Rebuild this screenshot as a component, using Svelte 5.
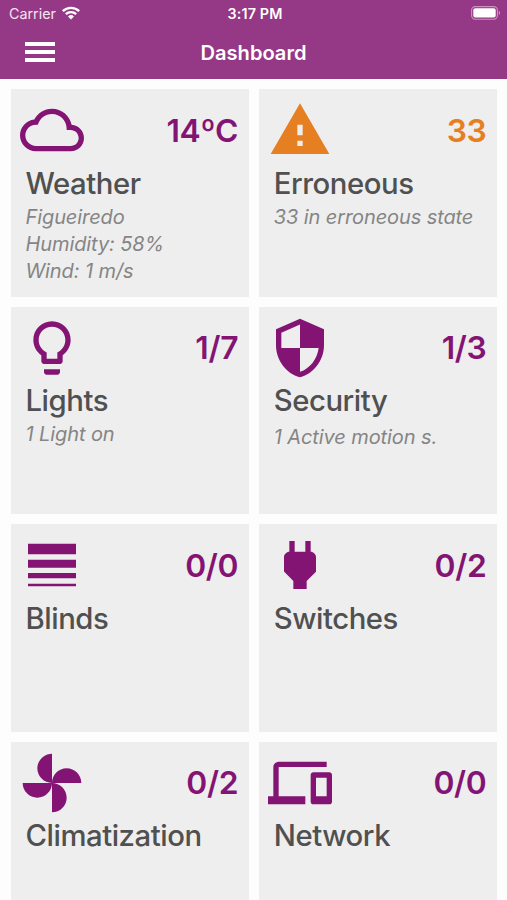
<script>
  const icons = {
    cloud: "M19.35 10.04C18.67 6.59 15.64 4 12 4 9.11 4 6.6 5.64 5.35 8.04 2.34 8.36 0 10.91 0 14c0 3.31 2.69 6 6 6h13c2.76 0 5-2.24 5-5 0-2.64-2.05-4.78-4.65-4.96zM19 18H6c-2.21 0-4-1.79-4-4s1.79-4 4-4h.71C7.37 7.69 9.48 6 12 6c3.04 0 5.5 2.46 5.5 5.5v.5H19c1.66 0 3 1.34 3 3s-1.34 3-3 3z",
    warning: "M1 21h22L12 2 1 21zm12-3h-2v-2h2v2zm0-4h-2v-4h2v4z",
    bulb: "M9 21c0 .5.4 1 1 1h4c.6 0 1-.5 1-1v-1H9v1zm3-19C8.1 2 5 5.1 5 9c0 2.4 1.2 4.5 3 5.7V17c0 .5.4 1 1 1h6c.6 0 1-.5 1-1v-2.3c1.8-1.3 3-3.4 3-5.7 0-3.9-3.1-7-7-7zm2.9 11.1l-.9.6V16h-4v-2.3l-.9-.6C7.8 12.2 7 10.6 7 9c0-2.8 2.2-5 5-5s5 2.2 5 5c0 1.6-.8 3.2-2.1 4.1z",
    shield: "M12 1L3 5v6c0 5.55 3.84 10.74 9 12 5.16-1.26 9-6.45 9-12V5l-9-4zm0 10.99h7c-.53 4.12-3.28 7.79-7 8.94V12H5V6.3l7-3.11v8.8z",
    blinds: "M3 4h18v4H3zM3 10h18v3H3zM3 15h18v2H3zM3 19h18v1H3z",
    plug: "M16.01 7L16 3h-2v4h-4V3H8v4h-.01C7 6.99 6 7.99 6 8.99v5.49L9.5 18v3h5v-3l3.5-3.51v-5.5c0-1-1-2-1.99-1.99z",
    fan: "M12 12c0-3 2.5-5.5 5.5-5.5S23 9 23 12H12zm0 0c0 3-2.5 5.5-5.5 5.5S1 15 1 12h11zm0 0c-3 0-5.5-2.5-5.5-5.5S9 1 12 1v11zm0 0c3 0 5.5 2.5 5.5 5.5S15 23 12 23V12z",
    devices: "M4 6h18V4H4c-1.1 0-2 .9-2 2v11H0v3h14v-3H4V6zm19 2h-6c-.55 0-1 .45-1 1v10c0 .55.45 1 1 1h6c.55 0 1-.45 1-1V9c0-.55-.45-1-1-1zm-1 9h-4v-7h4v7z",
  };

  const cards = [
    { title: "Weather", icon: "cloud", value: "14ºC", lines: ["Figueiredo", "Humidity: 58%", "Wind: 1 m/s"] },
    { title: "Erroneous", icon: "warning", value: "33", lines: ["33 in erroneous state"], alert: true },
    { title: "Lights", icon: "bulb", value: "1/7", lines: ["1 Light on"] },
    { title: "Security", icon: "shield", value: "1/3", lines: ["1 Active motion s."], spaced: true },
    { title: "Blinds", icon: "blinds", value: "0/0", lines: [] },
    { title: "Switches", icon: "plug", value: "0/2", lines: [] },
    { title: "Climatization", icon: "fan", value: "0/2", lines: [] },
    { title: "Network", icon: "devices", value: "0/0", lines: [] },
  ];
</script>

<div class="screen">
  <header>
    <div class="status">
      <div class="carrier">
        <span>Carrier</span>
        <svg class="wifi" viewBox="0 0 18 14">
          <path d="M0 4.3a13 13 0 0 1 18 0L16.3 6a10.5 10.5 0 0 0-14.6 0z" />
          <path d="M3 7.3a8.7 8.7 0 0 1 12 0L13.3 9a6.2 6.2 0 0 0-8.6 0z" />
          <path d="M6 10.4a4.3 4.3 0 0 1 6 0L9 13.5z" />
        </svg>
      </div>
      <div class="time">3:17 PM</div>
      <svg class="battery" viewBox="0 0 30 14">
        <rect class="shell" x="0.6" y="0.6" width="25.8" height="12.6" rx="3.6" />
        <rect x="2.3" y="2.3" width="22.4" height="9.2" rx="2" />
        <path class="tip" d="M27.8 4.8c1.9.8 1.9 3.4 0 4.2z" />
      </svg>
    </div>
    <div class="navbar">
      <div class="menu">
        <span></span>
        <span></span>
        <span></span>
      </div>
      <div class="heading">Dashboard</div>
    </div>
  </header>

  <div class="grid">
    {#each cards as card}
      <div class="card" class:alert={card.alert}>
        <div class="top">
          <svg class="icon" viewBox="0 0 24 24"><path d={icons[card.icon]} /></svg>
          <div class="value">{card.value}</div>
        </div>
        <div class="title">{card.title}</div>
        <div class="lines" class:spaced={card.spaced}>
          {#each card.lines as line}
            <div>{line}</div>
          {/each}
        </div>
      </div>
    {/each}
  </div>
</div>

<style>
  :global(body) {
    margin: 0;
    overflow: hidden;
  }

  .screen {
    height: 900px;
    overflow: hidden;
    background: #fdfdfd;
    font-family: Inter, "Liberation Sans", sans-serif;
  }

  header {
    height: 79px;
    background: #953885;
    color: #fff;
  }

  .status {
    display: grid;
    grid-template-columns: 1fr auto 1fr;
    align-items: center;
    height: 27px;
    padding: 0 6px 0 9px;
    font-size: 14.3px;
  }

  .carrier {
    display: flex;
    align-items: center;
    gap: 6px;
    color: #f5e4f2;
  }

  .wifi {
    width: 18px;
    height: 14px;
    margin-top: -1px;
    fill: #fff;
  }

  .time {
    font-weight: 600;
    letter-spacing: 0.15px;
  }

  .battery {
    width: 30px;
    height: 14px;
    margin-top: -1px;
    justify-self: end;
    fill: #fff;
  }

  .battery .shell {
    fill: none;
    stroke: #c893be;
    stroke-width: 1.1;
  }

  .battery .tip {
    fill: #c893be;
  }

  .navbar {
    display: grid;
    grid-template-columns: 1fr auto 1fr;
    align-items: center;
    height: 50px;
    padding: 0 25px;
  }

  .menu {
    display: flex;
    flex-direction: column;
    gap: 4.6px;
    width: 30px;
  }

  .menu span {
    height: 3.6px;
    background: #fff;
  }

  .heading {
    padding-top: 1px;
    font-size: 20.1px;
    font-weight: 600;
  }

  .grid {
    display: grid;
    grid-template-columns: 1fr 1fr;
    grid-auto-rows: 207.5px;
    gap: 10px;
    padding: 10px 10px 0 10.5px;
  }

  .card {
    box-sizing: border-box;
    padding: 9.5px 10.5px 0 10px;
    background: #eee;
    color: #841474;
  }

  .top {
    display: flex;
    justify-content: space-between;
    height: 64px;
  }

  .icon {
    width: 64px;
    height: 64px;
    margin: -0.5px 0 0 -0.3px;
    fill: currentColor;
  }

  .value {
    font-size: 31.8px;
    font-weight: 600;
    line-height: 63px;
    letter-spacing: -0.3px;
  }

  .alert {
    color: #e67e22;
  }

  .title {
    padding: 1px 0 0 5px;
    color: #505050;
    font-size: 29.3px;
    font-weight: 450;
    line-height: 40px;
    letter-spacing: -0.45px;
  }

  .lines {
    padding-left: 5px;
    color: #858585;
    font-size: 20px;
    font-style: italic;
    line-height: 27.3px;
    letter-spacing: -0.1px;
    white-space: nowrap;
  }

  .spaced {
    padding-top: 2.5px;
  }
</style>
